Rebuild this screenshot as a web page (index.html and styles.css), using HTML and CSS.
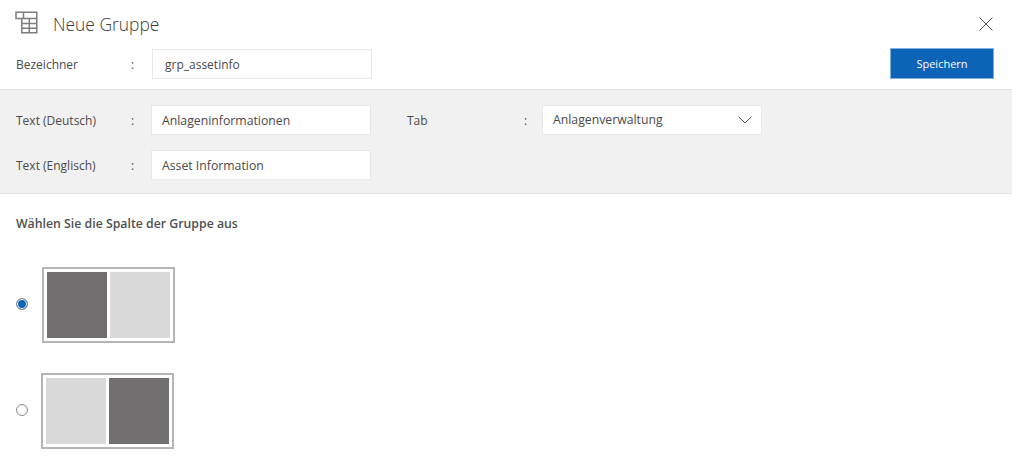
FILE: index.html
```html
<!DOCTYPE html>
<html lang="de">
<head>
<meta charset="utf-8">
<title>Neue Gruppe</title>
<link rel="stylesheet" href="styles.css">
</head>
<body>
<header class="head">
  <svg class="head-icon" width="23" height="23" viewBox="0 0 23 23" fill="none" stroke="#7d7d7d" stroke-width="1.5">
    <path d="M1 1.200H21.800V7.500H1ZM8.500 1.200V7.500M6.800 7.500V21.800H21.800V7.500M6.800 12.600H21.800M6.800 17.200H21.800M14.300 7.500V21.800"/>
  </svg>
  <h1 class="title">Neue Gruppe</h1>
  <svg class="close" width="14" height="14" viewBox="0 0 14 14" fill="none" stroke="#555" stroke-width="1">
    <path d="M.5.5 13.500 13.500M13.500.5.5 13.500"/>
  </svg>
</header>
<div class="id-row">
  <span class="label">Bezeichner</span>
  <span class="colon">:</span>
  <div class="field">grp_assetinfo</div>
  <button class="save" type="button">Speichern</button>
</div>
<section class="band">
  <div class="band-row">
    <span class="label">Text (Deutsch)</span>
    <span class="colon">:</span>
    <div class="field">Anlageninformationen</div>
    <span class="label label-tab">Tab</span>
    <span class="colon colon-tab">:</span>
    <div class="field select">Anlagenverwaltung
      <svg width="14" height="8" viewBox="0 0 14 8" fill="none" stroke="#555" stroke-width="1"><path d="M.5.7 7 7 13.500.7"/></svg>
    </div>
  </div>
  <div class="band-row">
    <span class="label">Text (Englisch)</span>
    <span class="colon">:</span>
    <div class="field">Asset Information</div>
  </div>
</section>
<section class="columns">
  <h2 class="sub">Wählen Sie die Spalte der Gruppe aus</h2>
  <div class="option option-first">
    <span class="radio radio-on"></span>
    <div class="layout"><i class="dark"></i><i class="light"></i></div>
  </div>
  <div class="option option-second">
    <span class="radio"></span>
    <div class="layout"><i class="light"></i><i class="dark"></i></div>
  </div>
</section>
</body>
</html>
```

FILE: styles.css
```css
* { box-sizing: border-box; }
html, body { margin: 0; height: 466px; overflow: hidden; background: #fff; }
body { font-family: "Open Sans", "Noto Sans", sans-serif; font-size: 12px; color: #4a4a4a; }
.head { height: 49px; display: flex; align-items: flex-start; padding: 11px 19px 0 15px; }
.head-icon { flex: none; }
.title { margin: 0 0 0 15px; font-size: 17.4px; line-height: 26px; font-weight: 300; color: #3c3c3c; flex: 1; }
.close { margin-top: 6px; }
.id-row { height: 41px; display: flex; align-items: flex-start; padding: 0 18px 0 16px; border-bottom: 1px solid #e2e2e2; }
.label { width: 115px; line-height: 32px; flex: none; }
.colon { width: 21px; line-height: 32px; flex: none; }
.field { width: 220px; height: 30px; line-height: 30px; padding: 0 10px; background: #fff; border: 1px solid #e8e8e8; color: #4a4a4a; flex: none; font-size: 12.25px; }
.id-row .field { padding-left: 12px; font-size: 12px; }
.save { margin: -1px 0 0 auto; width: 104px; height: 31px; background: #0c64b8; border: 1px solid #7fb0dc; color: #fff; font: 11px "Open Sans", "Noto Sans", sans-serif; padding: 0; }
.band { height: 104px; background: #f1f1f1; border-bottom: 1px solid #e2e2e2; padding: 15px 16px 0; }
.band-row { display: flex; margin-bottom: 13px; }
.band-row .colon { width: 20px; }
.label-tab { margin-left: 36px; }
.band-row .label-tab { width: 117px; }
.band-row .colon-tab { width: 18px; }
.select { display: flex; align-items: center; justify-content: space-between; padding-right: 9px; }
.columns { padding: 0 0 0 16px; }
.sub { margin: 0; padding-top: 21px; font-size: 12.3px; line-height: 18px; font-weight: 600; color: #505050; }
.option { display: flex; align-items: center; }
.option-first { margin-top: 34px; }
.option-second { margin-top: 30px; }
.radio { width: 12px; height: 12px; border-radius: 50%; border: 1px solid #8a8a8a; background: #fff; flex: none; margin: 0 14px 2px 0; }
.radio-on { background: #0c64b8; box-shadow: inset 0 0 0 1px #fff; }
.option-second .radio { margin-right: 13px; }
.layout { width: 133px; height: 76px; border: 2px solid #b5b5b5; padding: 3px; display: flex; gap: 3px; flex: none; }
.layout i { display: block; flex: 1; }
.dark { background: #716f6f; }
.light { background: #d9d9d9; }
```
